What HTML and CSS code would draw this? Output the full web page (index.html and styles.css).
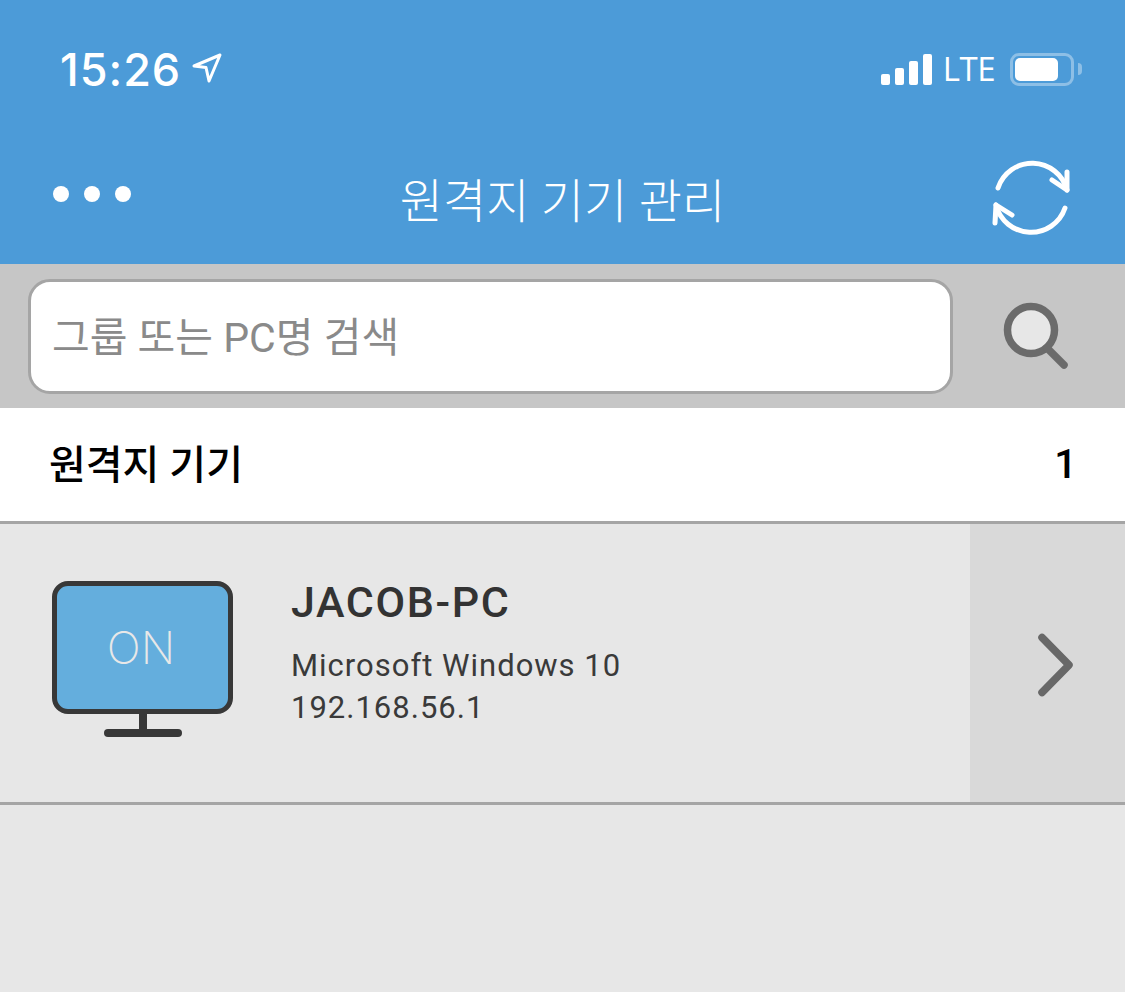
FILE: index.html
```html
<!DOCTYPE html>
<html lang="ko">
<head>
  <meta charset="UTF-8">
  <title>원격지 기기 관리</title>
  <link rel="stylesheet" href="styles.css">
</head>
<body>
  <header class="top">
    <div class="status">
      <div class="status-left">
        <span class="time">15:26</span>
        <svg class="loc" width="32" height="32" viewBox="0 0 32 32"><path d="M3 14 L29 3 L18 29 L15 15.500 Z" fill="none" stroke="#fff" stroke-width="3" stroke-linejoin="round"/></svg>
      </div>
      <div class="status-right">
        <div class="signal">
          <i class="bar b1"></i><i class="bar b2"></i><i class="bar b3"></i><i class="bar b4"></i>
        </div>
        <span class="lte">LTE</span>
        <div class="battery"><div class="charge"></div></div>
        <div class="nub"></div>
      </div>
    </div>
    <nav class="nav">
      <div class="dots"><i></i><i></i><i></i></div>
      <h1>원격지 기기 관리</h1>
      <svg class="sync" width="84" height="84" viewBox="0 0 84 84" fill="none" stroke="#fff" stroke-width="5" stroke-linecap="round" stroke-linejoin="round">
        <path d="M8 30 A36 36 0 0 1 77 32"/>
        <path d="M62 22 L77 32 L77 14"/>
        <path d="M75 50 A36 36 0 0 1 6 47"/>
        <path d="M22 57 L6 47 L5 65"/>
      </svg>
    </nav>
  </header>

  <section class="search">
    <div class="search-box">그룹 또는 PC명 검색</div>
    <svg class="search-icon" width="70" height="72" viewBox="0 0 70 72">
      <circle cx="29" cy="31" r="23.500" fill="#e7e7e7" stroke="#6b6b6b" stroke-width="7.500"/>
      <path d="M45 49 L62 66" stroke="#6b6b6b" stroke-width="7.500" stroke-linecap="round"/>
    </svg>
  </section>

  <section class="list-head">
    <span>원격지 기기</span>
    <span class="count">1</span>
  </section>

  <section class="device">
    <div class="device-main">
      <div class="monitor">
        <div class="screen">ON</div>
        <div class="neck"></div>
        <div class="foot"></div>
      </div>
      <div class="info">
        <div class="name">JACOB-PC</div>
        <div class="meta">Microsoft Windows 10</div>
        <div class="meta">192.168.56.1</div>
      </div>
    </div>
    <div class="device-arrow">
      <svg width="44" height="70" viewBox="0 0 44 70" fill="none" stroke="#686868" stroke-width="7.500" stroke-linecap="round" stroke-linejoin="round"><path d="M7 7.500 L34 35 L7 62.500"/></svg>
    </div>
  </section>
</body>
</html>
```

FILE: styles.css
```css
html, body { margin: 0; padding: 0; }
body { width: 1125px; height: 992px; overflow: hidden; background-color: #e7e7e7; font-family: Roboto, "Noto Sans CJK KR", sans-serif; color: #333; }

/* header */
.top { height: 264px; background-color: #4c9bd8; color: #fff; }
.status { height: 138px; display: flex; justify-content: space-between; align-items: center; padding: 0 43px 0 60px; }
.status-left { display: flex; align-items: center; gap: 10px; }
.time { font-family: Inter, sans-serif; font-size: 45px; font-weight: 500; letter-spacing: 1px; }
.loc { margin-top: -2px; }
.status-right { display: flex; align-items: center; }
.signal { display: flex; align-items: flex-end; gap: 5px; height: 31px; }
.bar { display: block; width: 9px; background-color: #fff; border-radius: 2px; }
.b1 { height: 11px; }
.b2 { height: 17px; }
.b3 { height: 24px; }
.b4 { height: 31px; }
.lte { font-family: "Open Sans", sans-serif; font-size: 33px; font-weight: 500; line-height: 32px; margin: 0 15px 0 11px; letter-spacing: -0.5px; }
.battery { width: 64px; height: 33px; box-sizing: border-box; border: 3px solid #8dbfe6; border-radius: 9px; padding: 2px; }
.charge { width: 43px; height: 23px; background-color: #fff; border-radius: 5px; }
.nub { width: 4px; height: 12px; background-color: #8dbfe6; border-radius: 0 4px 4px 0; margin-left: 4px; }

.nav { height: 126px; box-sizing: border-box; padding: 0 51px 8px 53px; display: flex; align-items: center; justify-content: space-between; position: relative; }
.dots { display: flex; gap: 15px; margin-top: -6px; }
.dots i { display: block; width: 16px; height: 16px; background-color: #fff; border-radius: 50%; }
.nav h1 { margin: 0; font-size: 47px; font-weight: 300; position: absolute; left: 0; right: 0; text-align: center; }
.sync { margin-top: 6px; }

/* search */
.search { height: 144px; box-sizing: border-box; background-color: #c6c6c6; display: flex; align-items: center; padding: 0 53px 0 28px; justify-content: space-between; }
.search-box { width: 925px; height: 115px; box-sizing: border-box; background-color: #fff; border: 3px solid #a5a5a5; border-radius: 22px; padding: 0 0 4px 21px; display: flex; align-items: center; font-size: 41px; color: #8a8a8a; font-weight: 400; }
.search-icon { margin-bottom: 2px; }

/* list */
.list-head { height: 116px; box-sizing: border-box; background-color: #fff; border-bottom: 3px solid #a5a5a5; display: flex; align-items: center; justify-content: space-between; padding: 0 48px 6px 49px; font-size: 40px; font-weight: 500; color: #000; }
.count { font-size: 40px; margin-top: 6px; }

.device { height: 281px; box-sizing: border-box; border-bottom: 3px solid #a5a5a5; display: flex; }
.device-main { flex: 1; display: flex; align-items: center; padding-left: 52px; }
.device-arrow { width: 155px; background-color: #d9d9d9; display: flex; align-items: center; padding: 4px 0 0 65px; box-sizing: border-box; }

.monitor { width: 181px; display: flex; flex-direction: column; align-items: center; margin-top: -9px; }
.screen { width: 181px; height: 133px; box-sizing: border-box; background-color: #64aedd; border: 5px solid #383838; border-radius: 16px; padding-right: 3px; display: flex; align-items: center; justify-content: center; color: #e8e8e8; font-family: Inter, sans-serif; font-weight: 200; font-size: 45px; }
.neck { width: 8px; height: 15px; background-color: #383838; }
.foot { width: 78px; height: 8px; background-color: #383838; border-radius: 4px; }

.info { margin-left: 58px; margin-top: -20px; }
.name { font-size: 43px; font-weight: 500; letter-spacing: 1.6px; color: #333; margin-bottom: 19px; line-height: 48px; }
.meta { font-size: 31px; line-height: 42px; letter-spacing: 1px; color: #3a3a3a; }
```
